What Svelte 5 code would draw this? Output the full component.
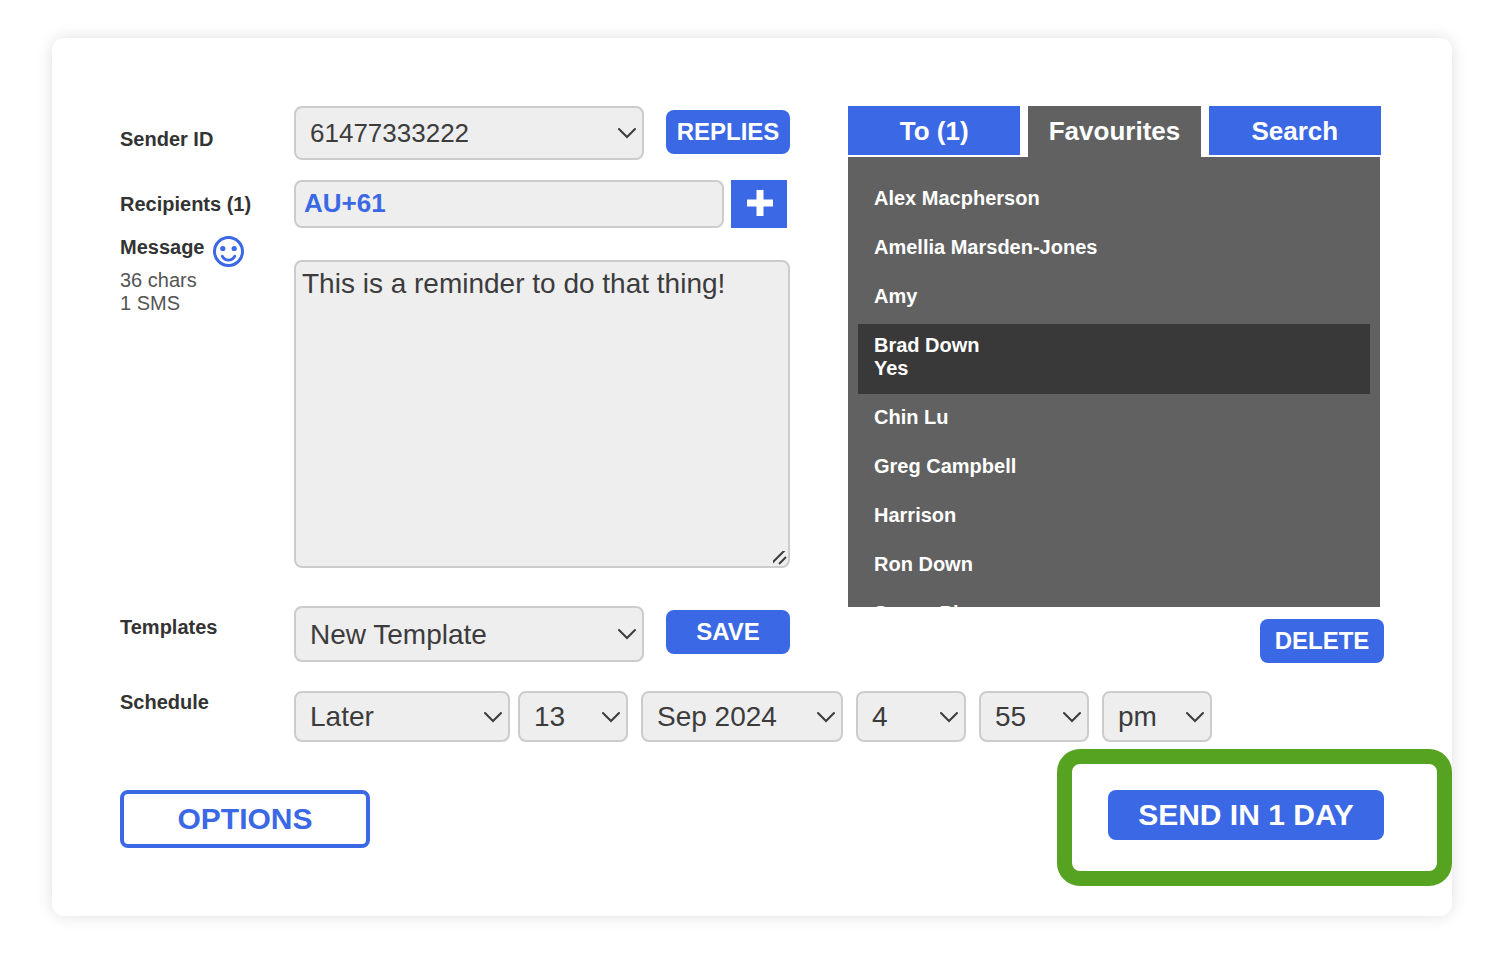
<script>
  const tabs = ['To (1)', 'Favourites', 'Search'];
  const contacts = [
    { name: 'Alex Macpherson' },
    { name: 'Amellia Marsden-Jones' },
    { name: 'Amy' },
    { name: 'Brad Down', reply: 'Yes' },
    { name: 'Chin Lu' },
    { name: 'Greg Campbell' },
    { name: 'Harrison' },
    { name: 'Ron Down' },
    { name: 'Susan Pine' }
  ];
  const dateParts = [
    { label: 'Day', value: '13', size: 'short' },
    { label: 'Month', value: 'Sep 2024', size: 'long' },
    { label: 'Hour', value: '4', size: 'short' },
    { label: 'Minute', value: '55', size: 'short' },
    { label: 'AM or PM', value: 'pm', size: 'short' }
  ];

  let activeTab = $state('Favourites');
  let selected = $state('Brad Down');
  let recipient = $state('AU+61');
  let message = $state('This is a reminder to do that thing!');
</script>

<form class="card" onsubmit={(e) => e.preventDefault()}>
  <div class="top">
    <div class="fields">
      <div class="row sender">
        <label for="sender">Sender ID</label>
        <div class="controls">
          <select id="sender" class="field senderSelect">
            <option>61477333222</option>
          </select>
          <button type="button" class="btn small">REPLIES</button>
        </div>
      </div>

      <div class="row recipients">
        <label for="recipients">Recipients (1)</label>
        <div class="controls tight">
          <input id="recipients" class="field" type="text" bind:value={recipient} />
          <button type="button" class="add" aria-label="Add recipient">
            <svg viewBox="0 0 28 28" width="28" height="28">
              <path d="M15 0v26M2 13h26" stroke="#fff" stroke-width="7" />
            </svg>
          </button>
        </div>
      </div>

      <div class="row message">
        <div>
          <div class="messageLabel">
            <label for="message">Message</label>
            <button type="button" class="emoji" aria-label="Insert emoji">
              <svg viewBox="0 0 31 31" width="31" height="31">
                <circle cx="15.5" cy="15.5" r="14" fill="none" stroke="#3b68e4" stroke-width="3" />
                <circle cx="9.8" cy="12.5" r="2.6" fill="#3b68e4" />
                <circle cx="21.2" cy="12.5" r="2.6" fill="#3b68e4" />
                <path
                  d="M9.2 20.2c2.6 5.2 10 5.2 12.6 0"
                  fill="none"
                  stroke="#3b68e4"
                  stroke-width="2.8"
                  stroke-linecap="round" />
              </svg>
            </button>
          </div>
          <div class="count">36 chars<br />1 SMS</div>
        </div>
        <textarea id="message" class="field" bind:value={message}></textarea>
      </div>

      <div class="row templates">
        <label for="template">Templates</label>
        <div class="controls">
          <select id="template" class="field">
            <option>New Template</option>
          </select>
          <button type="button" class="btn small">SAVE</button>
        </div>
      </div>
    </div>

    <div class="contacts">
      <div class="tabs" role="tablist">
        {#each tabs as tab}
          <button
            type="button"
            role="tab"
            class="tab"
            class:active={tab === activeTab}
            aria-selected={tab === activeTab}
            onclick={() => (activeTab = tab)}>
            {tab}
          </button>
        {/each}
      </div>
      <div class="panel" role="tabpanel">
        {#each contacts as contact}
          <button
            type="button"
            class="contact"
            class:selected={contact.name === selected}
            onclick={() => (selected = contact.name)}>
            {contact.name}
            {#if contact.reply}<br />{contact.reply}{/if}
          </button>
        {/each}
      </div>
      <button type="button" class="btn small delete">DELETE</button>
    </div>
  </div>

  <div class="row schedule">
    <label for="schedule">Schedule</label>
    <div class="when">
      <select id="schedule" class="field mode">
        <option>Later</option>
      </select>
      <div class="date">
        {#each dateParts as part}
          <select class="field {part.size}" aria-label={part.label}>
            <option>{part.value}</option>
          </select>
        {/each}
      </div>
    </div>
  </div>

  <div class="footer">
    <button type="button" class="btn options">OPTIONS</button>
    <div class="highlight">
      <button type="submit" class="btn send">SEND IN 1 DAY</button>
    </div>
  </div>
</form>

<style>
  :global(body) {
    background: #fff;
    font-family: 'Liberation Sans', Arial, sans-serif;
  }
  * {
    box-sizing: border-box;
  }
  button,
  select,
  input,
  textarea {
    font-family: inherit;
    margin: 0;
  }
  button {
    border: 0;
    padding: 0;
    cursor: pointer;
  }
  .card {
    margin: 38px 58px 38px 52px;
    padding: 68px;
    border-radius: 12px;
    background: #fff;
    box-shadow: 0 0 16px rgba(0, 0, 0, 0.13);
  }
  .top {
    display: grid;
    grid-template-columns: minmax(0, 670fr) minmax(0, 536fr);
    gap: 58px;
  }
  .row {
    display: grid;
    grid-template-columns: 174px minmax(0, 1fr);
    align-items: start;
  }
  label {
    color: #333;
    font-size: 20px;
    font-weight: bold;
    line-height: 23px;
  }
  .sender label {
    padding-top: 22px;
  }
  .recipients {
    margin-top: 20px;
    align-items: center;
  }
  .message {
    margin-top: 8px;
  }
  .templates {
    margin-top: 38px;
  }
  .templates label {
    padding-top: 10px;
  }
  .controls {
    display: flex;
    align-items: flex-start;
    gap: 22px;
  }
  .controls.tight {
    gap: 7px;
    padding-right: 3px;
  }
  .controls .field {
    flex: 1;
    min-width: 0;
  }
  .field {
    border: 2px solid #ccc;
    border-radius: 8px;
    background-color: #eee;
    color: #3c3c3c;
    font-size: 28px;
  }
  select.field {
    appearance: none;
    height: 51px;
    padding: 0 32px 0 14px;
    background-image: url("data:image/svg+xml,%3Csvg xmlns='http://www.w3.org/2000/svg' width='18' height='12' fill='none' stroke='%233c3c3c' stroke-width='2' stroke-linecap='round'%3E%3Cpath d='M1 2l8 8 8-8'/%3E%3C/svg%3E");
    background-repeat: no-repeat;
    background-position: right 6px center;
  }
  .controls select.field {
    height: 56px;
  }
  .controls select.senderSelect {
    height: 54px;
    font-size: 26px;
  }
  input.field {
    height: 48px;
    padding: 0 8px 2px;
    color: #3b68e4;
    font-size: 26px;
    font-weight: bold;
  }
  textarea.field {
    display: block;
    width: 100%;
    height: 308px;
    margin-top: 24px;
    padding: 6px;
    line-height: 32px;
    resize: vertical;
  }
  textarea::-webkit-scrollbar {
    width: 18px;
    height: 18px;
  }
  textarea::-webkit-resizer {
    background: url("data:image/svg+xml,%3Csvg xmlns='http://www.w3.org/2000/svg' width='18' height='18' fill='none' stroke='%233c3c3c' stroke-width='2'%3E%3Cpath d='M1 16L16 1M9 16l7-7'/%3E%3C/svg%3E")
      no-repeat right bottom;
  }
  .btn {
    border-radius: 8px;
    background: #3b68e4;
    color: #fff;
    font-size: 30px;
    font-weight: bold;
  }
  .small {
    width: 124px;
    height: 44px;
    font-size: 24px;
  }
  .controls .btn {
    margin-top: 4px;
  }
  .add {
    display: flex;
    align-items: center;
    justify-content: center;
    width: 56px;
    height: 48px;
    background: #3b68e4;
  }
  .messageLabel {
    display: flex;
    gap: 8px;
    height: 33px;
  }
  .emoji {
    height: 31px;
    background: none;
  }
  .emoji svg {
    display: block;
  }
  .count {
    color: #555;
    font-size: 20px;
    line-height: 23px;
  }
  .contacts {
    display: flex;
    flex-direction: column;
  }
  .tabs {
    display: flex;
    gap: 8px;
    height: 51px;
    margin-right: 3px;
    align-items: flex-start;
  }
  .tab {
    flex: 1;
    height: 49px;
    padding-top: 1px;
    background: #3b68e4;
    color: #fff;
    font-size: 26px;
    font-weight: bold;
  }
  .tab.active {
    height: 51px;
    padding-bottom: 2px;
    background: #616161;
  }
  .panel {
    display: flex;
    flex-direction: column;
    gap: 2px;
    height: 450px;
    margin-right: 4px;
    padding: 20px 10px;
    overflow-y: auto;
    scrollbar-width: none;
    background: #616161;
  }
  .contact {
    flex: none;
    padding: 10px 16px 14px;
    background: none;
    color: #fff;
    font-size: 20px;
    font-weight: bold;
    line-height: 23px;
    text-align: left;
  }
  .contact.selected {
    background: #393939;
  }
  .delete {
    align-self: flex-end;
    margin-top: 12px;
  }
  .schedule {
    margin-top: 28px;
  }
  .when {
    display: flex;
    gap: 8px;
  }
  .date {
    display: flex;
    gap: 13px;
  }
  .mode {
    width: 216px;
  }
  .short {
    width: 110px;
  }
  .long {
    width: 202px;
  }
  .footer {
    display: flex;
    align-items: flex-start;
    justify-content: space-between;
    margin-top: 48px;
  }
  .options {
    width: 250px;
    height: 58px;
    border: 4px solid #3b68e4;
    background: #fff;
    color: #3b68e4;
  }
  .highlight {
    position: relative;
  }
  .highlight::after {
    content: '';
    position: absolute;
    inset: -41px -68px -46px -51px;
    border: 15px solid #56a321;
    border-radius: 23px;
    pointer-events: none;
  }
  .send {
    display: block;
    width: 276px;
    height: 50px;
  }
</style>
